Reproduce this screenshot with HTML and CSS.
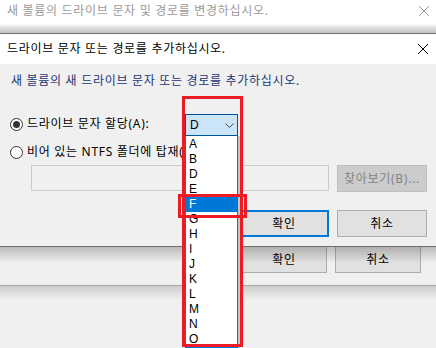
FILE: index.html
```html
<!DOCTYPE html>
<html lang="ko">
<head>
    <meta charset="UTF-8">
    <title>드라이브 문자 또는 경로 추가</title>
    <link rel="stylesheet" href="styles.css">
</head>
<body>
    <div class="back-top">
        <span>새 볼륨의 드라이브 문자 및 경로를 변경하십시오.</span>
        <svg class="close" width="10" height="10" viewBox="0 0 10 10"><path d="M0 0L10 10M10 0L0 10" stroke="currentColor"/></svg>
    </div>

    <div class="dialog">
        <div class="titlebar">
            <span>드라이브 문자 또는 경로를 추가하십시오.</span>
            <svg width="10" height="10" viewBox="0 0 10 10"><path d="M0 0L10 10M10 0L0 10" stroke="#000"/></svg>
        </div>
        <div class="client">
            <p class="instr">새 볼륨의 새 드라이브 문자 또는 경로를 추가하십시오.</p>
            <label class="option"><input type="radio" name="mode" checked> 드라이브 문자 할당(A):</label>
            <label class="option"><input type="radio" name="mode"> 비어 있는 NTFS 폴더에 탑재(M):</label>
            <div class="path-row">
                <div class="path-field"></div>
                <button class="btn" disabled>찾아보기(B)...</button>
            </div>
            <div class="actions">
                <button class="btn default">확인</button>
                <button class="btn">취소</button>
            </div>
        </div>
    </div>

    <div class="back-bottom">
        <button class="btn back">확인</button>
        <button class="btn back">취소</button>
    </div>
    <div class="desk"></div>

    <div class="picker">
        <div class="combo">
            <span>D</span>
            <svg width="9" height="5" viewBox="0 0 9 5"><path d="M0.5 0.5L4.5 4.5L8.5 0.5" fill="none" stroke="#4a4a4a"/></svg>
        </div>
        <ul class="list">
            <li>A</li>
            <li>B</li>
            <li>D</li>
            <li>E</li>
            <li class="selected">F</li>
            <li>G</li>
            <li>H</li>
            <li>I</li>
            <li>J</li>
            <li>K</li>
            <li>L</li>
            <li>M</li>
            <li>N</li>
            <li>O</li>
        </ul>
    </div>

    <!-- red highlight marks -->
    <div class="mark mark-list"></div>
    <div class="mark mark-item"></div>
</body>
</html>
```

FILE: styles.css
```css
body { margin: 0; width: 436px; height: 348px; overflow: hidden; position: relative; background: #f0f0f0; font-family: "Noto Sans", "Noto Sans CJK KR", sans-serif; font-size: 12px; line-height: 16px; letter-spacing: 0.7px; color: #000; }

.back-top { height: 33px; box-sizing: border-box; padding: 3px 7px 0 7px; display: flex; justify-content: space-between; align-items: flex-start; color: #9a9a9a; background: linear-gradient(#fff 0, #fff 24px, #ececec 26px, #c2c2c2 33px); }
.back-top .close { margin-top: 3px; }

.dialog { border-top: 1px solid #6e6e6e; border-bottom: 1px solid #6e6e6e; }
.titlebar { height: 30px; background: #fff; display: flex; align-items: center; justify-content: space-between; padding: 0 8px 0 7px; }
.client { height: 182px; box-sizing: border-box; padding: 9px 9px 0 10px; background: #f0f0f0; }
.instr { margin: 0 0 26px 1px; color: #1e3472; }

.option { display: flex; align-items: center; gap: 4px; width: 172px; height: 18px; margin-bottom: 10px; white-space: nowrap; overflow: hidden; }
.option + .option { margin-bottom: 4px; }
.option input { appearance: none; flex: none; margin: 0; width: 13px; height: 13px; border: 1px solid #333; border-radius: 50%; background: #fff; box-sizing: border-box; display: grid; place-items: center; }
.option input:checked::after { content: ""; width: 7px; height: 7px; border-radius: 50%; background: #333; }

.path-row { display: flex; gap: 8px; margin-left: 21px; align-items: flex-start; }
.path-field { width: 298px; height: 26px; box-sizing: border-box; border: 1px solid #cccccc; background: #f0f0f0; }

.btn { width: 90px; height: 27px; box-sizing: border-box; border: 1px solid #adadad; background: #e1e1e1; font: inherit; letter-spacing: inherit; color: #000; padding: 0; }
.btn:disabled { background: #cccccc; border-color: #bfbfbf; color: #838383; }
.btn.default { border: 2px solid #0078d7; }

.actions { display: flex; justify-content: flex-end; gap: 8px; margin-top: 18px; }

.back-bottom { height: 38px; position: relative; display: flex; justify-content: flex-end; gap: 8px; padding-right: 15px; border-bottom: 1px solid #a6a6a6; background: #f0f0f0; }
.back-bottom::after { content: ""; position: absolute; left: 0; right: 0; top: 0; height: 16px; background: linear-gradient(rgba(0, 0, 0, 0.22), rgba(0, 0, 0, 0)); }
.btn.back { width: 86px; height: 26px; border-top: none; }
.desk { height: 62px; background: linear-gradient(#cdcdcd, #f0f0f0 14px); }

.picker { position: absolute; left: 185px; top: 114px; width: 53px; font-family: "Liberation Sans", sans-serif; letter-spacing: 0; }
.combo { height: 22px; box-sizing: border-box; border: 1px solid #005499; background: #cce4f7; display: flex; align-items: center; justify-content: space-between; padding: 0 3px 0 4px; }
.list { list-style: none; margin: 0; padding: 1px 0 0 0; background: #fff; border: 1px solid #0078d7; border-top: none; box-shadow: 2px 0 0 #c4c4c4; }
.list li { height: 15px; line-height: 15px; padding-left: 3px; }
.list .selected { background: #0078d7; color: #fff; }

.mark { position: absolute; box-sizing: border-box; border: 3px solid #ec1c24; }
.mark-list { left: 182px; top: 96px; width: 61px; height: 251px; }
.mark-item { left: 178px; top: 194px; width: 69px; height: 24px; }
```
